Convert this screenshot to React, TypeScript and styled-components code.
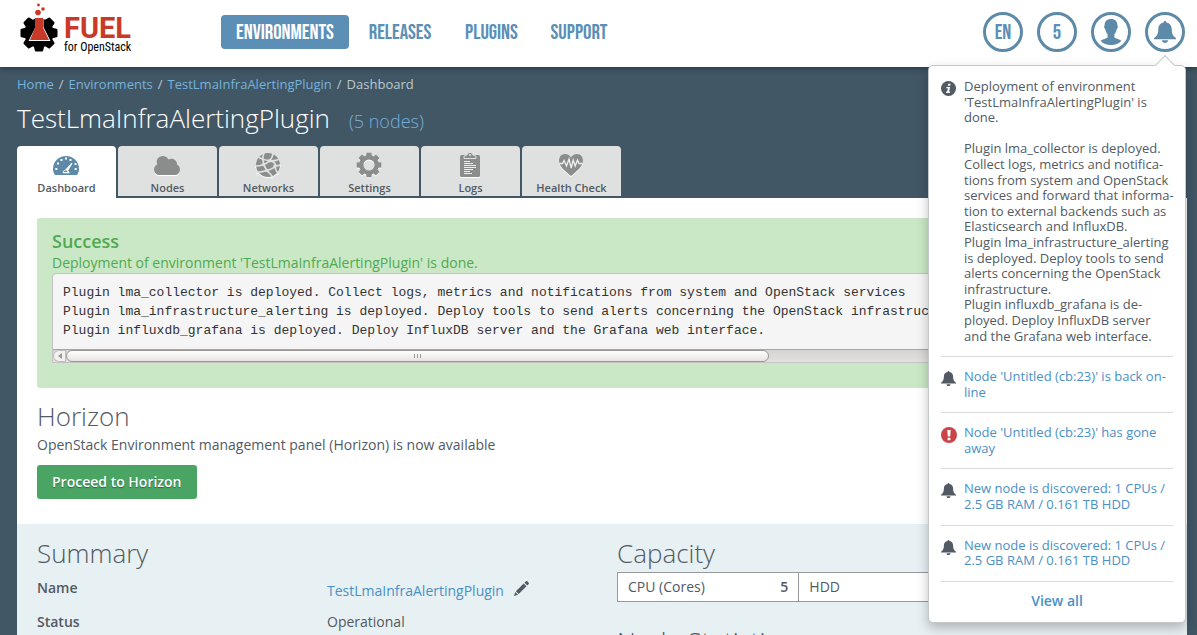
import React from 'react';
import styled, { createGlobalStyle, css } from 'styled-components';

const blue = '#5b8fb5';
const link = '#4a90c6';
const dark = '#415766';
const ink = '#525a63';
const narrow = "'Bebas Neue', 'Liberation Sans Narrow', 'Roboto Condensed', 'Open Sans Condensed', Roboto, sans-serif";

const GlobalStyle = createGlobalStyle`
  *, *::before, *::after { box-sizing: border-box; }
  body {
    margin: 0;
    background: ${dark};
    color: ${ink};
    font: 14px/20px 'Open Sans', sans-serif;
  }
  h1, h2, p, ul, ol, pre { margin: 0; padding: 0; }
  ul, ol { list-style: none; }
  a { color: ${link}; text-decoration: none; }
  button { font-family: inherit; cursor: pointer; }
`;

const Page = styled.div`
  height: 100vh;
  overflow: hidden;
`;

const Header = styled.header`
  position: relative;
  z-index: 2;
  display: flex;
  align-items: flex-start;
  height: 67px;
  padding: 0 12px 0 17px;
  background: #fff;
  box-shadow: 0 1px 7px rgba(0, 0, 0, 0.4);
`;

const Logo = styled.a`
  display: flex;
  width: 204px;
  height: 60px;
  color: #000;
`;

const LogoText = styled.span`
  display: flex;
  flex-direction: column;
  padding-top: 15px;
`;

const LogoName = styled.span`
  color: #c83a27;
  font: 700 29px/26px Roboto, sans-serif;
`;

const LogoSub = styled.span`
  font: 400 12px/12px 'Liberation Sans Narrow', 'Roboto Condensed', 'Open Sans', sans-serif;
  white-space: nowrap;
`;

const Nav = styled.nav`
  display: grid;
  grid-template-columns: 128px 94px 81px 86px;
  gap: 4px;
  margin-top: 15px;
`;

const NavLink = styled.a<{ $active?: boolean }>`
  height: 34px;
  border-radius: 4px;
  color: ${p => (p.$active ? '#fff' : blue)};
  background: ${p => (p.$active ? blue : 'transparent')};
  font: 300 21px/36px ${narrow};
  text-align: center;
  white-space: nowrap;
`;

const Tools = styled.div`
  position: relative;
  display: flex;
  gap: 14px;
  margin: 12px 0 0 auto;
`;

const RoundButton = styled.button`
  display: flex;
  align-items: center;
  justify-content: center;
  width: 40px;
  height: 40px;
  padding: 0;
  border: 3px solid #5c8aa8;
  border-radius: 50%;
  background: #fff;
  color: ${blue};
  font: 400 21px/20px ${narrow};

  span { padding-top: 2px; }
`;

const Popover = styled.section`
  position: absolute;
  top: 53px;
  right: -1px;
  width: 258px;
  padding: 13px 12px 11px;
  border: 1px solid #c4c8ca;
  border-radius: 5px;
  background: #fff;
  box-shadow: 0 5px 12px rgba(0, 0, 0, 0.25);
  font-size: 13px;
  line-height: 1.2;

  &::before {
    content: '';
    position: absolute;
    top: -8px;
    right: 13px;
    width: 14px;
    height: 14px;
    border: 1px solid #c4c8ca;
    border-width: 1px 0 0 1px;
    background: #fff;
    transform: rotate(45deg);
  }
`;

const Notice = styled.li`
  display: grid;
  grid-template-columns: 16px 1fr;
  column-gap: 7px;
  padding-bottom: 12px;
  border-bottom: 1px solid #d8dadb;

  & + & { padding-top: 12px; }
  & > svg { margin-top: 2px; }
  p { margin-right: -2px; white-space: pre-line; }
`;

const ViewAll = styled.a`
  display: block;
  margin-top: 9px;
  font-size: 14px;
  line-height: 20px;
  font-weight: 600;
  text-align: center;
`;

const Main = styled.main`
  padding: 0 10px 0 17px;
`;

const Crumbs = styled.ol`
  display: flex;
  padding-top: 7px;
  color: #bcc7cd;
  font-size: 13px;
  line-height: 20px;

  a { color: #75b2dd; }
  li + li::before { content: '/'; padding: 0 5px; }
`;

const Title = styled.h1`
  display: flex;
  align-items: baseline;
  height: 52px;
  color: #fff;
  font-size: 26px;
  line-height: 48px;
  font-weight: 300;

  small {
    margin-left: 19px;
    color: #75aed6;
    font-size: 18px;
  }
`;

const Tabs = styled.nav`
  display: flex;
  gap: 2px;
  height: 52px;
`;

const Tab = styled.a<{ $active?: boolean }>`
  display: flex;
  flex-direction: column;
  align-items: center;
  width: 99px;
  height: 50px;
  padding-top: 6px;
  border-radius: 4px 4px 0 0;
  background: #dfe1e0;
  color: ${ink};
  font-size: 11px;
  line-height: 18px;
  font-weight: 600;
  ${p => p.$active && css`
    height: 52px;
    background: #fff;
  `}
  svg { flex: none; margin: 0 2px 1px 0; filter: drop-shadow(0 1px 0 #fff); }
`;

const Content = styled.div`
  padding-top: 20px;
  background: #fff;
`;

const Alert = styled.section`
  margin: 0 20px;
  padding: 13px 15px 25px;
  border-radius: 3px;
  background: #cae8c6;
  color: #51a951;

  h2 { margin-bottom: 1px; font-size: 18px; line-height: 20px; font-weight: 600; }
  p { line-height: 21px; }
`;

const LogBox = styled.div`
  overflow: hidden;
  border: 1px solid #c4c4c4;
  border-radius: 4px 4px 0 0;
  background: #f5f5f5;
  color: #333;

  pre {
    padding: 9px 10px 10px;
    font: 13px/19px 'Liberation Mono', monospace;
  }
`;

const ScrollTrack = styled.div`
  display: flex;
  height: 12px;
  background: linear-gradient(#d5d3d1, #e3e1df);
  box-shadow: 0 -1px 0 #a8a5a2;
`;

const ScrollArrow = styled.span`
  display: flex;
  align-items: center;
  justify-content: center;
  width: 13px;
  border-radius: 6px 0 0 6px;
  background: #f3f2f1;
  box-shadow: inset 0 0 0 1px #c0bdba;
`;

const ScrollThumb = styled.span`
  display: flex;
  align-items: center;
  justify-content: center;
  gap: 2px;
  width: 64%;
  border: 1px solid #999693;
  border-radius: 6px;
  background: linear-gradient(#fff, #e6e4e2);

  i { width: 1px; height: 4px; background: #999; }
`;

const Horizon = styled.section`
  padding: 13px 20px 25px;

  p { margin: 4px 0 10px; }
`;

const Heading = styled.h2`
  font-size: 26px;
  line-height: 30px;
  font-weight: 300;
`;

const Proceed = styled.button`
  height: 34px;
  padding: 0 15px;
  border: 0;
  border-radius: 3px;
  background: #4aa564;
  color: #fff;
  font-size: 14px;
  line-height: 20px;
  font-weight: 600;
  text-shadow: 0 1px 1px rgba(0, 0, 0, 0.4);
`;

const Overview = styled.section`
  display: grid;
  grid-template-columns: 1fr 1fr;
  gap: 30px;
  min-height: 240px;
  padding: 14px 20px;
  background: #e7f0f3;
`;

const Facts = styled.dl`
  display: grid;
  grid-template-columns: 290px 1fr;
  row-gap: 14px;
  margin: 10px 0 0;

  dt { font-weight: 600; }
  dd { display: flex; margin: 0; }
`;

const EditLink = styled.a`
  display: flex;
  gap: 10px;
  padding-top: 3px;
  height: 20px;
`;

const Capacity = styled.table`
  width: 100%;
  margin: 4px 0 24px;
  border-collapse: collapse;
  background: #fff;

  th, td { height: 29px; padding: 0 10px; border: 1px solid #97999b; }
  th { border-right: 0; font-weight: 400; text-align: left; }
  td { border-left: 0; font-weight: 600; text-align: right; }
`;

const gear = (teeth: number, outer: number, inner: number, root: number, tip: number) => {
  const step = (Math.PI * 2) / teeth;
  const at = (r: number, a: number) => `${(r * Math.sin(a)).toFixed(2)} ${(-r * Math.cos(a)).toFixed(2)}`;
  const points: string[] = [];
  for (let i = 0; i < teeth; i++) {
    const a = i * step;
    points.push(at(inner, a - root), at(outer, a - tip), at(outer, a + tip), at(inner, a + root));
  }
  return `M${points.join('L')}Z`;
};

const LogoMark = () => (
  <svg width="47" height="60" viewBox="17 0 47 60" aria-hidden="true">
    <g transform="translate(39 33)">
      <path d={gear(8, 17.5, 13.5, 0.3, 0.17)} stroke="#000" strokeWidth="2.5" strokeLinejoin="round" />
    </g>
    <path d="M33 14h11.500v4.500l-1 .5v8L50.500 41H28.500l7-14v-8l-2.500-.5z" fill="#fff" />
    <path d="M35 18h8v9.500l6 12.500H30l5-12.500z" fill="#c83a27" />
    <circle cx="38" cy="12.500" r="2.800" fill="#c83a27" />
    <circle cx="43" cy="9" r="1.800" fill="#c83a27" />
    <circle cx="38.500" cy="5" r="1.400" fill="#c83a27" />
  </svg>
);

const BellIcon = ({ size = 16, color = ink }: { size?: number; color?: string }) => (
  <svg width={size} height={size} viewBox="0 0 20 20" fill={color} aria-hidden="true">
    <path d="M10 0c.8 0 1.300.5 1.300 1.400C14.500 2 16 4.200 16.100 7c.1 4 .7 6.500 3.900 8.500v1H0v-1C3.200 13.500 3.800 11 3.900 7 4 4.200 5.500 2 8.700 1.400 8.700.5 9.200 0 10 0z" />
    <path d="M7.200 17.500h5.600c-.3 1.600-1.300 2.500-2.800 2.500s-2.500-.9-2.800-2.500z" />
  </svg>
);

const UserIcon = () => (
  <svg width="24" height="26" viewBox="0 0 24 26" fill="#5c8aa8" aria-hidden="true">
    <path d="M12 0c4.200 0 6.500 2.500 6.400 6.500.8.500.6 2.300-.7 3.800-.5 2.300-1.200 3.800-2.300 5v3.200c1.500 1.300 5 1.600 7 3.200-2.600 3-6 4.300-10.400 4.300S4.200 24.700 1.600 21.700c2-1.600 5.500-1.900 7-3.200v-3.200c-1.100-1.200-1.800-2.700-2.300-5C5 8.800 4.800 7 5.600 6.500 5.500 2.500 7.800 0 12 0z" />
  </svg>
);

const InfoIcon = () => (
  <svg width="15" height="15" viewBox="0 0 16 16" aria-hidden="true">
    <circle cx="8" cy="8" r="8" fill={ink} />
    <path d="M7.700 2.800h2.600l-.5 2.300H7.200zM5.800 6.300h3.900l-1.100 5h1.200l-.3 1.500H5.300l.3-1.500h1l.8-3.500H5.500z" fill="#fff" />
  </svg>
);

const ErrorIcon = () => (
  <svg width="16" height="16" viewBox="0 0 16 16" aria-hidden="true">
    <circle cx="8" cy="8" r="8" fill="#cb4447" />
    <path d="M6.300 3h3.400L9.200 9.500H6.800zM6.600 10.700h2.800v2.500H6.600z" fill="#fff" />
  </svg>
);

const PencilIcon = () => (
  <svg width="15" height="15" viewBox="0 0 15 15" fill={ink} aria-hidden="true">
    <path d="M0 15l1.200-4 2.800 2.800zM1.900 10.200l7.800-7.700 2.800 2.800-7.800 7.700zM10.500 1.700L12 .3c.4-.4.900-.4 1.300 0l1.400 1.400c.4.4.4.900 0 1.300l-1.400 1.500z" />
  </svg>
);

const GaugeIcon = () => (
  <svg width="26" height="26" viewBox="0 0 26 26" aria-hidden="true">
    <path d="M2 23C.7 21 0 19 0 17 0 9.500 5.800 4 13 4s13 5.500 13 13c0 2-.7 4-2 6z" fill="#5c8aa8" />
    <g fill="#fff">
      <path d="M12 5.500h2v2h-2zM7.500 7h2v2h-2zM16.500 7h2v2h-2zM4 10.500h2v2H4zM2.300 16h2v2h-2zM21.700 16h2v2h-2zM21.500 11h2v2h-2z" />
      <path d="M18.700 10.800l.8.800-4.300 6.800c1 .8 1.300 1.400 1.300 2.800H9.700c0-1.600.8-2.900 2.800-3.600z" />
    </g>
    <path d="M12 18.700c1.300-.5 2.300.2 2.600 1.300h-4c.2-.6.700-1.100 1.400-1.300z" fill="#5c8aa8" />
  </svg>
);

const CloudIcon = () => (
  <svg width="26" height="26" viewBox="0 0 26 26" fill="#8b8c8c" aria-hidden="true">
    <path d="M6 23c-3.400 0-6-2.400-6-5.600 0-2.400 1.200-4.200 3.200-5C1.500 7.700 4.700 4 8.700 4c2.700 0 4.700 1.300 5.700 3.500 3.900-2.200 9 .4 8.700 5.200 1.800.8 2.900 2.500 2.900 4.700 0 3.200-2.300 5.600-5.500 5.600z" />
  </svg>
);

const NetworkIcon = () => (
  <svg width="26" height="26" viewBox="0 0 26 26" aria-hidden="true">
    <circle cx="13" cy="13" r="12" fill="#8b8c8c" />
    <g fill="none" stroke="#dfe1e0" strokeWidth="1.600">
      <path d="M3 5c4 2.500 7 3.500 11.500 3.700S22 8.500 24 7M0 14c5 0 11-1.500 14.500-5.300S18 3.500 18 1M9 1C7 6 8 13.500 12 18.500s5 4 5.500 7M1 20.500c5-.5 8-1 11-2s7-2 8-4.500-.5-4-5.500-5.300M20 14c2 0 4-.5 6-1.500M20 14c0 3 1 5 3.500 7.500" />
    </g>
    <g fill="#dfe1e0">
      <circle cx="14.500" cy="8.700" r="1.800" /><circle cx="8" cy="12.500" r="1.500" /><circle cx="12" cy="18.500" r="1.800" /><circle cx="20" cy="14" r="1.800" />
    </g>
  </svg>
);

const GearIcon = () => (
  <svg width="26" height="26" viewBox="-13 -13 26 26" fill="#8b8c8c" aria-hidden="true">
    <path fillRule="evenodd" d={`${gear(8, 12.6, 9.8, 0.29, 0.2)}M5.500 0A5.500 5.500 0 1 0-5.500 0A5.500 5.500 0 1 0 5.500 0Z`} />
  </svg>
);

const ClipboardIcon = () => (
  <svg width="26" height="26" viewBox="0 0 26 26" aria-hidden="true">
    <rect x="3" y="3" width="20" height="22" rx="1.500" fill="#8b8c8c" />
    <path d="M7 6.500V4.200L10 3c.3-1.600 1.300-2.500 3-2.500s2.700.9 3 2.500l3 1.200v2.300z" fill="#8b8c8c" stroke="#dfe1e0" />
    <circle cx="13" cy="3" r="1.100" fill="#dfe1e0" />
    <path d="M7 9.500h6M7 11.500h9M7 13.500h12M7 15.500h12M7 17.500h9M7 19.500h6M7 21.500h8" stroke="#eef0ef" strokeWidth="1.200" />
  </svg>
);

const HeartIcon = () => (
  <svg width="26" height="26" viewBox="0 0 26 26" aria-hidden="true">
    <path d="M13 24C7 19 1 14.500 1 8.500 1 4.800 3.700 2 7.200 2c2.500 0 4.600 1.300 5.800 3.400C14.200 3.300 16.300 2 18.800 2 22.300 2 25 4.800 25 8.500 25 14.500 19 19 13 24z" fill="#8b8c8c" />
    <path d="M1.500 11.500h3l1.500-3 2.500 5.500 2.500-7 2.200 9 2-8 2 6 2.300-6 1.500 3.500h3.500" fill="none" stroke="#eef0ef" strokeWidth="1.300" />
  </svg>
);

const tabs = [
  { label: 'Dashboard', Icon: GaugeIcon },
  { label: 'Nodes', Icon: CloudIcon },
  { label: 'Networks', Icon: NetworkIcon },
  { label: 'Settings', Icon: GearIcon },
  { label: 'Logs', Icon: ClipboardIcon },
  { label: 'Health Check', Icon: HeartIcon },
];

const deployed = `Deployment of environment 'TestLmaInfraAlertingPlugin' is done.

Plugin lma_collector is deployed. Collect logs, metrics and notifica\u00adtions from system and OpenStack services and forward that informa\u00adtion to external backends such as Elasticsearch and InfluxDB.
Plugin lma_infrastructure_alerting is deployed. Deploy tools to send alerts concerning the OpenStack infrastructure.
Plugin influxdb_grafana is de\u00adployed. Deploy InfluxDB server and the Grafana web interface.`;

const log = `Plugin lma_collector is deployed. Collect logs, metrics and notifications from system and OpenStack services
Plugin lma_infrastructure_alerting is deployed. Deploy tools to send alerts concerning the OpenStack infrastructure.
Plugin influxdb_grafana is deployed. Deploy InfluxDB server and the Grafana web interface.`;

const notices = [
  { text: "Node 'Untitled (cb:23)' is back on\u00adline", error: false },
  { text: "Node 'Untitled (cb:23)' has gone away", error: true },
  { text: 'New node is discovered: 1 CPUs / 2.5 GB RAM / 0.161 TB HDD', error: false },
  { text: 'New node is discovered: 1 CPUs / 2.5 GB RAM / 0.161 TB HDD', error: false },
];

export default function App() {
  return (
    <Page>
      <GlobalStyle />
      <Header>
        <Logo href="#">
          <LogoMark />
          <LogoText>
            <LogoName>FUEL</LogoName>
            <LogoSub>for OpenStack</LogoSub>
          </LogoText>
        </Logo>
        <Nav>
          <NavLink href="#environments" $active>ENVIRONMENTS</NavLink>
          <NavLink href="#releases">RELEASES</NavLink>
          <NavLink href="#plugins">PLUGINS</NavLink>
          <NavLink href="#support">SUPPORT</NavLink>
        </Nav>
        <Tools>
          <RoundButton><span>EN</span></RoundButton>
          <RoundButton><span>5</span></RoundButton>
          <RoundButton aria-label="User"><UserIcon /></RoundButton>
          <RoundButton aria-label="Notifications"><BellIcon size={22} color="#5c8aa8" /></RoundButton>
          <Popover>
            <ul>
              <Notice>
                <InfoIcon />
                <p>{deployed}</p>
              </Notice>
              {notices.map((n, i) => (
                <Notice key={i}>
                  {n.error ? <ErrorIcon /> : <BellIcon size={15} />}
                  <a href="#node">{n.text}</a>
                </Notice>
              ))}
            </ul>
            <ViewAll href="#notifications">View all</ViewAll>
          </Popover>
        </Tools>
      </Header>
      <Main>
        <Crumbs>
          <li><a href="#">Home</a></li>
          <li><a href="#environments">Environments</a></li>
          <li><a href="#cluster">TestLmaInfraAlertingPlugin</a></li>
          <li>Dashboard</li>
        </Crumbs>
        <Title>TestLmaInfraAlertingPlugin <small>(5 nodes)</small></Title>
        <Tabs>
          {tabs.map(({ label, Icon }, i) => (
            <Tab key={label} href={`#${label}`} $active={i === 0}>
              <Icon />
              {label}
            </Tab>
          ))}
        </Tabs>
        <Content>
          <Alert>
            <h2>Success</h2>
            <p>Deployment of environment 'TestLmaInfraAlertingPlugin' is done.</p>
            <LogBox>
              <pre>{log}</pre>
              <ScrollTrack>
                <ScrollArrow>
                  <svg width="4" height="6" viewBox="0 0 4 6" aria-hidden="true"><path d="M4 0v6L0 3z" fill="#999" /></svg>
                </ScrollArrow>
                <ScrollThumb><i /><i /><i /></ScrollThumb>
              </ScrollTrack>
            </LogBox>
          </Alert>
          <Horizon>
            <Heading>Horizon</Heading>
            <p>OpenStack Environment management panel (Horizon) is now available</p>
            <Proceed>Proceed to Horizon</Proceed>
          </Horizon>
          <Overview>
            <div>
              <Heading>Summary</Heading>
              <Facts>
                <dt>Name</dt>
                <dd><EditLink href="#rename">TestLmaInfraAlertingPlugin <PencilIcon /></EditLink></dd>
                <dt>Status</dt>
                <dd>Operational</dd>
              </Facts>
            </div>
            <div>
              <Heading>Capacity</Heading>
              <Capacity>
                <colgroup><col width="23%" /><col width="10%" /><col /></colgroup>
                <tbody>
                  <tr>
                    <th scope="row">CPU (Cores)</th>
                    <td>5</td>
                    <th scope="row">HDD</th>
                  </tr>
                </tbody>
              </Capacity>
              <Heading>Node Statistics</Heading>
            </div>
          </Overview>
        </Content>
      </Main>
    </Page>
  );
}
